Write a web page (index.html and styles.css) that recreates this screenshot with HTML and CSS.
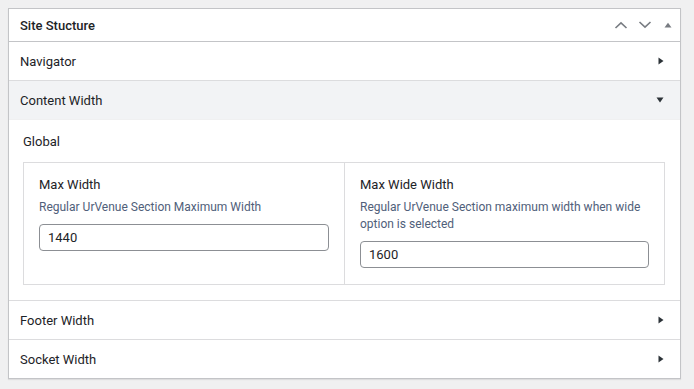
FILE: index.html
```html
<!DOCTYPE html>
<html lang="en">
<head>
  <meta charset="UTF-8" />
  <title>Site Stucture</title>
  <link rel="stylesheet" href="styles.css">
</head>
<body>

  <div class="panel">
    <div class="panel-head">
      <h2>Site Stucture</h2>
      <div class="head-actions">
        <svg width="14" height="8" viewBox="0 0 14 8"><path d="M1.5 7 L7 1.8 L12.5 7" fill="none" stroke="#787c82" stroke-width="1.6"/></svg>
        <svg width="14" height="8" viewBox="0 0 14 8"><path d="M1.5 1 L7 6.2 L12.5 1" fill="none" stroke="#787c82" stroke-width="1.6"/></svg>
        <svg width="8" height="6" viewBox="0 0 8 6"><path d="M0.5 5.5 L4 0.8 L7.5 5.5 Z" fill="#787c82"/></svg>
      </div>
    </div>

    <div class="section">
      <span>Navigator</span>
      <svg class="arrow" width="6" height="8" viewBox="0 0 6 8"><path d="M0.5 0.5 L5.5 4 L0.5 7.5 Z" fill="#2c3338"/></svg>
    </div>

    <div class="section open">
      <span>Content Width</span>
      <svg class="arrow" width="8" height="6" viewBox="0 0 8 6"><path d="M0.5 0.5 L7.5 0.5 L4 5.5 Z" fill="#2c3338"/></svg>
    </div>
    <div class="section-body">
      <div class="group-label">Global</div>
      <div class="fields">
        <div class="field">
          <label>Max Width</label>
          <p class="desc">Regular UrVenue Section Maximum Width</p>
          <input type="text" value="1440">
        </div>
        <div class="field">
          <label>Max Wide Width</label>
          <p class="desc">Regular UrVenue Section maximum width when wide option is selected</p>
          <input type="text" value="1600">
        </div>
      </div>
    </div>

    <div class="section">
      <span>Footer Width</span>
      <svg class="arrow" width="6" height="8" viewBox="0 0 6 8"><path d="M0.5 0.5 L5.5 4 L0.5 7.5 Z" fill="#2c3338"/></svg>
    </div>

    <div class="section">
      <span>Socket Width</span>
      <svg class="arrow" width="6" height="8" viewBox="0 0 6 8"><path d="M0.5 0.5 L5.5 4 L0.5 7.5 Z" fill="#2c3338"/></svg>
    </div>
  </div>

</body>
</html>
```

FILE: styles.css
```css
body {
  margin: 0;
  padding: 8px 13px 8px 8px;
  background: #f0f0f1;
  font-family: Roboto, "Liberation Sans", sans-serif;
  font-size: 13px;
  color: #1d2327;
}
.panel {
  background: #fff;
  border: 1px solid #c3c4c7;
  box-shadow: 0 1px 1px rgba(0,0,0,0.08);
}
.panel-head {
  display: flex;
  justify-content: space-between;
  align-items: center;
  height: 32px;
  padding: 0 8px 0 11px;
  border-bottom: 1px solid #c3c4c7;
}
.panel-head h2 {
  margin: 0;
  font-size: 13px;
  font-weight: 500;
}
.head-actions {
  display: flex;
  align-items: center;
  gap: 10px;
}
.head-actions svg:last-child {
  margin-left: 2px;
}
.section {
  display: flex;
  justify-content: space-between;
  align-items: center;
  height: 38px;
  padding: 0 16px 0 11px;
  border-bottom: 1px solid #dcdcde;
}
.section:last-child {
  border-bottom: none;
}
.section.open {
  background: #f2f3f5;
  border-bottom-color: #f0f0f1;
}
.section-body {
  padding: 14px 15px 15px 14px;
  border-bottom: 1px solid #dcdcde;
}
.group-label {
  margin-bottom: 12px;
  line-height: 16px;
}
.fields {
  display: grid;
  grid-template-columns: 1fr 1fr;
  border: 1px solid #dcdcde;
}
.field {
  padding: 14px 15px 28px 15px;
}
.field + .field {
  border-left: 1px solid #dcdcde;
  padding-bottom: 16px;
}
.field label {
  display: block;
  line-height: 16px;
  margin-bottom: 6px;
}
.desc {
  margin: 0 0 8px;
  font-size: 12px;
  line-height: 17px;
  color: #50607a;
}
.field input {
  display: block;
  box-sizing: border-box;
  width: 100%;
  height: 27px;
  padding: 0 8px;
  border: 1px solid #8c8f94;
  border-radius: 4px;
  font-family: inherit;
  font-size: 13px;
  color: #1d2327;
}
```
